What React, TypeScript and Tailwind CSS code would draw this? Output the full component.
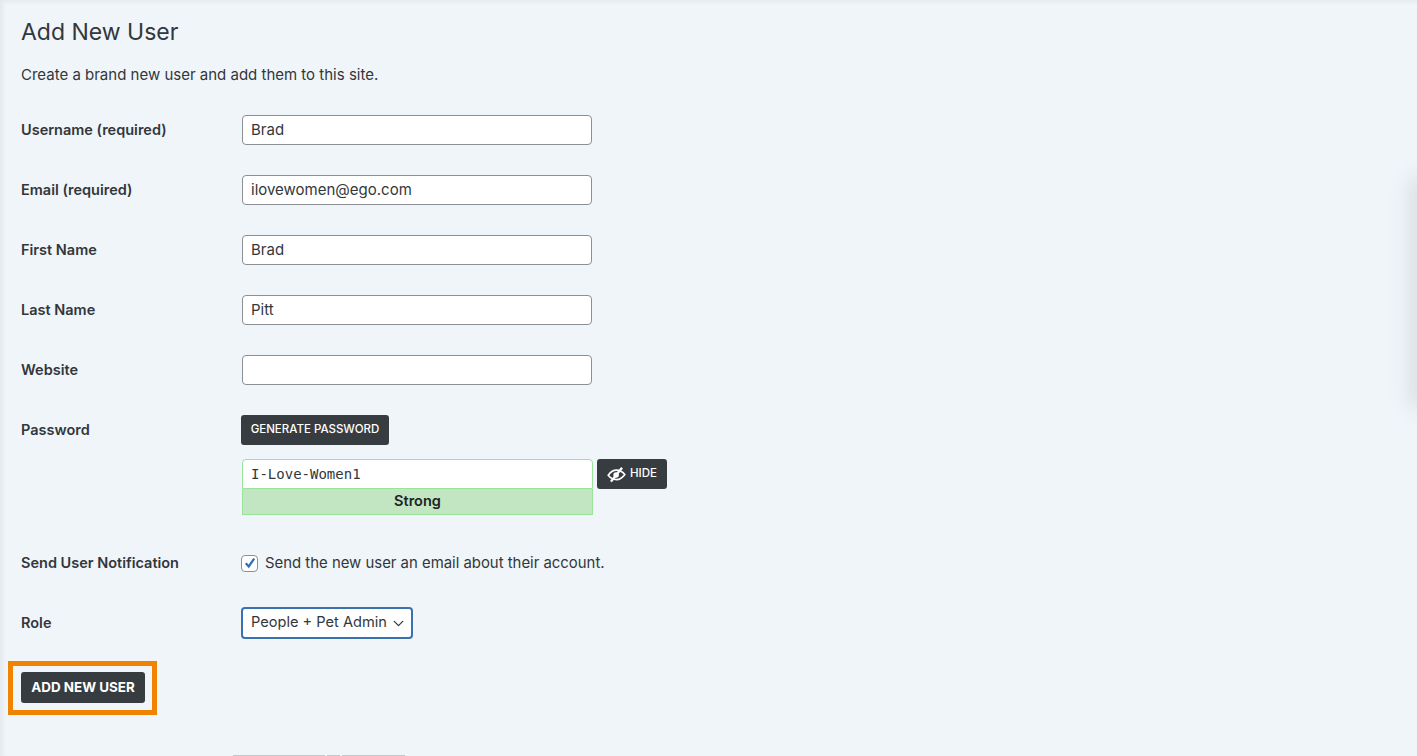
import React from 'react';
import { ChevronDown } from 'lucide-react';

const FONT = "font-['Inter','Noto_Sans',sans-serif]";

const inputClass =
  'block h-[30px] w-[350px] rounded-[4px] border border-[#8c8f94] bg-white px-[8px] pb-[1px] text-[15px] text-[#32373c] outline-none';

const Row: React.FC<{ label: string; className?: string; children: React.ReactNode }> = ({ label, className, children }) => (
  <div className={`flex items-start ${className ?? ''}`}>
    <label className="w-[221px] shrink-0 pt-[5px] text-[14.5px] leading-[20px] font-semibold text-[#32373c]">{label}</label>
    {children}
  </div>
);

const TextRow: React.FC<{ label: string; value: string }> = ({ label, value }) => (
  <Row label={label} className="mb-[30px]">
    <input className={inputClass} value={value} readOnly />
  </Row>
);

const HiddenEye = () => (
  <svg viewBox="0 0 24 24" className="h-[19px] w-[19px]" fill="none" stroke="currentColor">
    <path d="M1.5 13 C5 8 9 6.5 12 6.5 C15 6.5 19 8 22.5 12 C19 17 15 18.5 12 18.5 C9 18.5 5 17.5 1.5 13Z" strokeWidth="2" />
    <circle cx="11.5" cy="12.5" r="3.5" fill="currentColor" stroke="none" />
    <path d="M5 21 L19 3.5" strokeWidth="3" />
  </svg>
);

export default function App() {
  return (
    <div className={`relative h-[756px] w-[1417px] overflow-hidden bg-[#f0f5fa] pl-[21px] shadow-[inset_3px_2px_4px_rgba(0,0,0,0.05)] ${FONT}`}>
      <h1 className="pt-[17px] text-[23px] leading-[30px] font-normal text-[#32373c]">Add New User</h1>
      <p className="mt-[18px] mb-[30px] text-[15px] leading-[20px] text-[#32373c]">Create a brand new user and add them to this site.</p>

      <TextRow label="Username (required)" value="Brad" />
      <TextRow label="Email (required)" value="ilovewomen@ego.com" />
      <TextRow label="First Name" value="Brad" />
      <TextRow label="Last Name" value="Pitt" />
      <TextRow label="Website" value="" />

      <Row label="Password" className="mb-[38px]">
        <div className="-ml-px flex flex-col">
          <button className="h-[30px] w-[148px] rounded-[3px] bg-[#373c41] text-[11.5px] font-medium text-white">GENERATE PASSWORD</button>
          <div className="mt-[14px] flex items-start gap-[4px] pl-px">
            <div className="w-[351px]">
              <input
                className="block h-[30px] w-full rounded-t-[4px] border border-[#9be39b] bg-white px-[8px] font-['DejaVu_Sans_Mono',monospace] text-[14px] text-[#32373c] outline-none"
                value="I-Love-Women1"
                readOnly
              />
              <div className="h-[26px] border border-t-0 border-[#9be39b] bg-[#c1e6c1] text-center text-[14.5px] leading-[24px] font-semibold text-[#1d2327]">Strong</div>
            </div>
            <button className="flex h-[30px] w-[70px] items-center justify-center gap-[4px] rounded-[3px] bg-[#373c41] text-[11.5px] font-medium text-white">
              <HiddenEye />
              HIDE
            </button>
          </div>
        </div>
      </Row>

      <div className="mb-[34px] flex items-center">
        <span className="w-[220px] shrink-0 text-[14.5px] leading-[20px] font-semibold text-[#32373c]">Send User Notification</span>
        <label className="flex items-center gap-[7px] text-[14.9px] leading-[20px] text-[#32373c]">
          <span className="relative flex h-[17px] w-[17px] items-center justify-center rounded-[4px] border border-[#8c8f94] bg-white">
            <input type="checkbox" defaultChecked className="absolute inset-0 appearance-none" />
            <svg viewBox="0 0 16 16" className="h-[14px] w-[14px] text-[#2f6fb8]" fill="none" stroke="currentColor" strokeWidth="2.6" strokeLinejoin="miter">
              <path d="M3.2 8.2 L6.6 12 L12.8 3" />
            </svg>
          </span>
          Send the new user an email about their account.
        </label>
      </div>

      <div className="mb-[22px] flex items-center">
        <span className="w-[220px] shrink-0 text-[14.5px] leading-[20px] font-semibold text-[#32373c]">Role</span>
        <div className="relative">
          <select className="block h-[32px] w-[172px] appearance-none rounded-[4px] border-2 border-[#3a72b0] bg-white pl-[8px] text-[14.6px] text-[#32373c] outline-none">
            <option>People + Pet Admin</option>
          </select>
          <ChevronDown size={17} strokeWidth={1.8} className="pointer-events-none absolute top-[8px] right-[6px] text-[#32373c]" />
        </div>
      </div>

      <div className="-ml-[13px] w-[149px] border-[5px] border-[#f08300] pt-[6px] pb-[7px] pl-[8px]">
        <button className="block h-[31px] w-[124px] rounded-[3px] bg-[#373c41] text-[13.4px] font-bold text-white">ADD NEW USER</button>
      </div>

      {/* cut off edge of the next section, bottom of the page */}
      <div className="absolute bottom-0 left-[233px] flex h-px w-[172px] gap-[2px]">
        <div className="w-[92px] bg-[#c4c7cb]" />
        <div className="w-[13px] bg-[#c4c7cb]" />
        <div className="flex-1 bg-[#c4c7cb]" />
      </div>
      {/* soft shadow from the panel off to the right */}
      <div className="absolute top-[175px] right-[-22px] h-[235px] w-[30px] rounded-full bg-[#d9dfe4] blur-[10px]" />
    </div>
  );
}
